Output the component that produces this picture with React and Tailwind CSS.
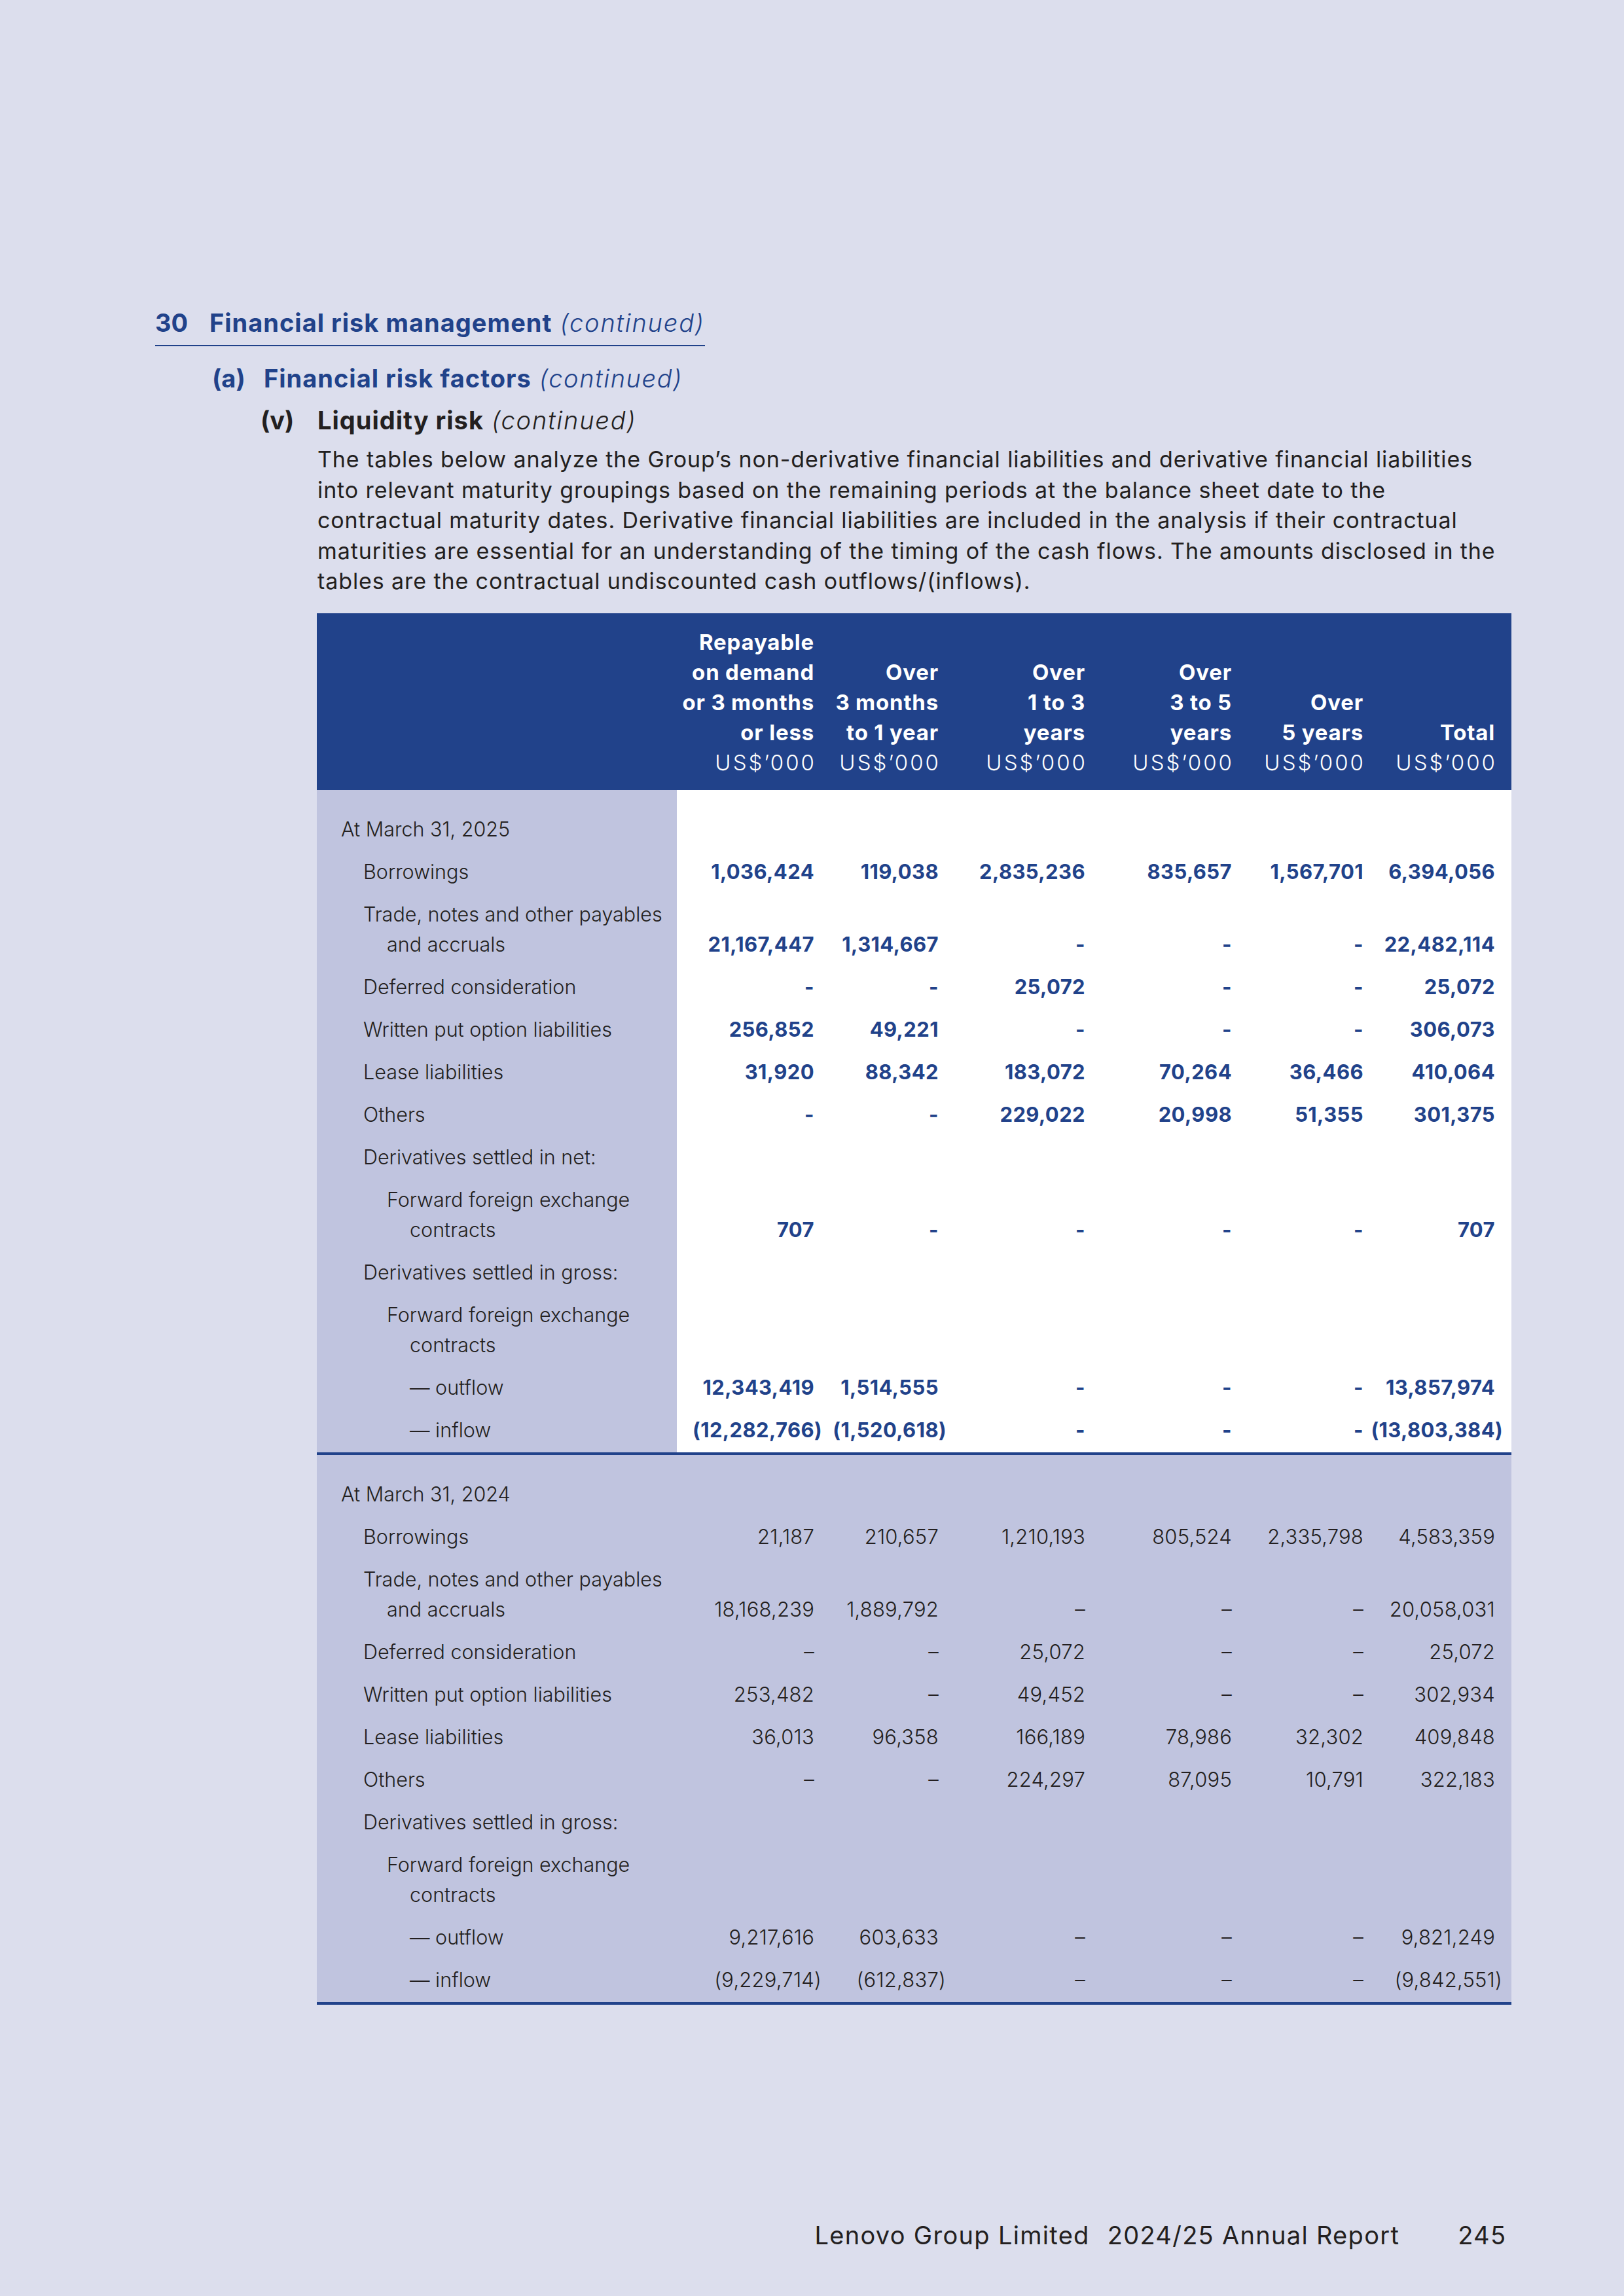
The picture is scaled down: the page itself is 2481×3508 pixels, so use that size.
import React from "react";

const GRID = "grid grid-cols-[550px_210px_190px_224px_224px_201px_201px_25px]";

const rows2025 = [
  { label: ["At March 31, 2025"], indent: 0 },
  { label: ["Borrowings"], indent: 1, vals: ["1,036,424", "119,038", "2,835,236", "835,657", "1,567,701", "6,394,056"] },
  { label: ["Trade, notes and other payables", "and accruals"], indent: 1, vals: ["21,167,447", "1,314,667", "-", "-", "-", "22,482,114"] },
  { label: ["Deferred consideration"], indent: 1, vals: ["-", "-", "25,072", "-", "-", "25,072"] },
  { label: ["Written put option liabilities"], indent: 1, vals: ["256,852", "49,221", "-", "-", "-", "306,073"] },
  { label: ["Lease liabilities"], indent: 1, vals: ["31,920", "88,342", "183,072", "70,264", "36,466", "410,064"] },
  { label: ["Others"], indent: 1, vals: ["-", "-", "229,022", "20,998", "51,355", "301,375"] },
  { label: ["Derivatives settled in net:"], indent: 1 },
  { label: ["Forward foreign exchange", "contracts"], indent: 2, vals: ["707", "-", "-", "-", "-", "707"] },
  { label: ["Derivatives settled in gross:"], indent: 1 },
  { label: ["Forward foreign exchange", "contracts"], indent: 2 },
  { label: ["— outflow"], indent: 3, vals: ["12,343,419", "1,514,555", "-", "-", "-", "13,857,974"] },
  { label: ["— inflow"], indent: 3, vals: ["(12,282,766)", "(1,520,618)", "-", "-", "-", "(13,803,384)"] },
];

const rows2024 = [
  { label: ["At March 31, 2024"], indent: 0 },
  { label: ["Borrowings"], indent: 1, vals: ["21,187", "210,657", "1,210,193", "805,524", "2,335,798", "4,583,359"] },
  { label: ["Trade, notes and other payables", "and accruals"], indent: 1, vals: ["18,168,239", "1,889,792", "–", "–", "–", "20,058,031"] },
  { label: ["Deferred consideration"], indent: 1, vals: ["–", "–", "25,072", "–", "–", "25,072"] },
  { label: ["Written put option liabilities"], indent: 1, vals: ["253,482", "–", "49,452", "–", "–", "302,934"] },
  { label: ["Lease liabilities"], indent: 1, vals: ["36,013", "96,358", "166,189", "78,986", "32,302", "409,848"] },
  { label: ["Others"], indent: 1, vals: ["–", "–", "224,297", "87,095", "10,791", "322,183"] },
  { label: ["Derivatives settled in gross:"], indent: 1 },
  { label: ["Forward foreign exchange", "contracts"], indent: 2 },
  { label: ["— outflow"], indent: 3, vals: ["9,217,616", "603,633", "–", "–", "–", "9,821,249"] },
  { label: ["— inflow"], indent: 3, vals: ["(9,229,714)", "(612,837)", "–", "–", "–", "(9,842,551)"] },
];

const firstIndent = { 0: "pl-[37px]", 1: "pl-[71px]", 2: "pl-[107px]", 3: "pl-[142px]" };
const contIndent = { 0: "pl-[71px]", 1: "pl-[107px]", 2: "pl-[142px]", 3: "pl-[178px]" };

function Num({ v }) {
  if (v.startsWith("(") && v.endsWith(")")) {
    return (
      <span className="whitespace-nowrap">
        {v.slice(0, -1)}
        <span className="inline-block w-0">)</span>
      </span>
    );
  }
  return <span className="whitespace-nowrap">{v}</span>;
}

function Row({ row, bold }) {
  return (
    <div className={`${GRID} pt-[10px] pb-[9px] leading-[46px]`}>
      <div className="flex flex-col font-light text-[30.5px] text-[#231f20]">
        {row.label.map((l, i) => (
          <div key={i} className={`whitespace-nowrap ${i === 0 ? firstIndent[row.indent] : contIndent[row.indent]}`}>
            {l}
          </div>
        ))}
      </div>
      {(row.vals || ["", "", "", "", "", ""]).map((v, i) => (
        <div
          key={i}
          className={`flex flex-col justify-end items-end text-[31px] proportional-nums ${
            bold ? "font-bold text-[#21428a] tracking-[0.4px]" : "font-light text-[#231f20] tracking-[0.2px]"
          }`}
        >
          {v ? <Num v={v} /> : null}
        </div>
      ))}
      <div />
    </div>
  );
}

function HeadCell({ lines }) {
  return (
    <div className="flex flex-col items-end justify-end leading-[46px] text-white text-[33px]">
      {lines.map((l, i) => (
        <div key={i} className="whitespace-nowrap font-bold tracking-[0.8px]">
          {l}
        </div>
      ))}
      <div className="whitespace-nowrap font-light tracking-[3px] mr-[-3px]">US$’000</div>
    </div>
  );
}

export default function App() {
  return (
    <div className="w-[2481px] h-[3508px] bg-[#dcdeed] flex flex-col font-['Inter','Noto_Sans',sans-serif] text-[#231f20]">
      <div className="pt-[470px] pl-[237px] flex flex-col items-start">
        {/* Section heading */}
        <div className="inline-flex items-baseline text-[38px] leading-[46px] pb-[11px] border-b-2 border-[#21428a] text-[#21428a] whitespace-nowrap">
          <span className="w-[83px] font-bold">30</span>
          <span className="font-bold tracking-[1px]">Financial risk management</span>
          <span className="font-light italic ml-[12px] tracking-[1.8px]">(continued)</span>
        </div>

        <div className="mt-[26px] ml-[87px] flex items-baseline text-[38px] leading-[46px] text-[#21428a] whitespace-nowrap">
          <span className="w-[79px] font-bold">(a)</span>
          <span className="font-bold tracking-[1px]">Financial risk factors</span>
          <span className="font-light italic ml-[12px] tracking-[1.6px]">(continued)</span>
        </div>

        <div className="mt-[18px] ml-[161px] flex items-baseline text-[38px] leading-[46px] text-[#231f20] whitespace-nowrap">
          <span className="w-[87px] font-bold">(v)</span>
          <span className="font-bold tracking-[1px]">Liquidity risk</span>
          <span className="font-light italic ml-[12px] tracking-[1.8px]">(continued)</span>
        </div>

        <p className="mt-[14px] ml-[248px] w-[1900px] text-[34px] leading-[46.5px] font-normal tracking-[0.9px] text-[#231f20] whitespace-nowrap">
          The tables below analyze the Group’s non-derivative financial liabilities and derivative financial liabilities
          <br />
          into relevant maturity groupings based on the remaining periods at the balance sheet date to the
          <br />
          contractual maturity dates. Derivative financial liabilities are included in the analysis if their contractual
          <br />
          maturities are essential for an understanding of the timing of the cash flows. The amounts disclosed in the
          <br />
          tables are the contractual undiscounted cash outflows/(inflows).
        </p>

        {/* Table */}
        <div className="mt-[25px] ml-[247px] w-[1825px]">
          <div className={`${GRID} bg-[#21428a] h-[270px] pb-[19px]`}>
            <div />
            <HeadCell lines={["Repayable", "on demand", "or 3 months", "or less"]} />
            <HeadCell lines={["Over", "3 months", "to 1 year"]} />
            <HeadCell lines={["Over", "1 to 3", "years"]} />
            <HeadCell lines={["Over", "3 to 5", "years"]} />
            <HeadCell lines={["Over", "5 years"]} />
            <HeadCell lines={["Total"]} />
            <div />
          </div>

          <div className="bg-[linear-gradient(to_right,#c0c4df_550px,#ffffff_550px)] pt-[27px] pb-[2px] border-b-4 border-[#21428a]">
            {rows2025.map((r, i) => (
              <Row key={i} row={r} bold />
            ))}
          </div>

          <div className="bg-[#c0c4df] pt-[27px] pb-[2px] border-b-4 border-[#21428a]">
            {rows2024.map((r, i) => (
              <Row key={i} row={r} />
            ))}
          </div>
        </div>
      </div>

      <div className="mt-auto pb-[70px] pr-[181px] flex justify-end items-baseline text-[38px] leading-[46px] text-[#231f20] whitespace-nowrap">
        <span className="tracking-[1.3px]">Lenovo Group Limited</span>
        <span className="ml-[27px] tracking-[1.3px]">2024/25 Annual Report</span>
        <span className="ml-[89px] tracking-[1.3px] mr-[-1.3px]">245</span>
      </div>
    </div>
  );
}
